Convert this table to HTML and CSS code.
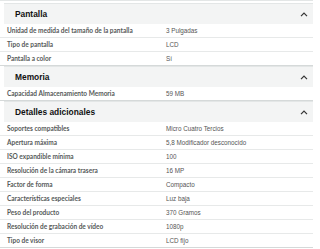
FILE: index.html
```html
<!DOCTYPE html>
<html lang="es">
<head>
<meta charset="utf-8">
<link rel="stylesheet" href="styles.css">
</head>
<body>
<div class="page">
  <section class="sec">
    <div class="head"><span class="title">Pantalla</span><svg class="chev" width="8" height="5" viewBox="0 0 8 5"><polyline points="1,4.2 4,1.2 7,4.2" fill="none" stroke="#333" stroke-width="1.2"/></svg></div>
    <div class="row"><span class="lab">Unidad de medida del tamaño de la pantalla</span><span class="val">3 Pulgadas</span></div>
    <div class="row"><span class="lab">Tipo de pantalla</span><span class="val">LCD</span></div>
    <div class="row"><span class="lab">Pantalla a color</span><span class="val">Sí</span></div>
  </section>
  <section class="sec">
    <div class="head"><span class="title">Memoria</span><svg class="chev" width="8" height="5" viewBox="0 0 8 5"><polyline points="1,4.2 4,1.2 7,4.2" fill="none" stroke="#333" stroke-width="1.2"/></svg></div>
    <div class="row"><span class="lab">Capacidad Almacenamiento Memoria</span><span class="val">59 MB</span></div>
  </section>
  <section class="sec">
    <div class="head"><span class="title">Detalles adicionales</span><svg class="chev" width="8" height="5" viewBox="0 0 8 5"><polyline points="1,4.2 4,1.2 7,4.2" fill="none" stroke="#333" stroke-width="1.2"/></svg></div>
    <div class="row"><span class="lab">Soportes compatibles</span><span class="val">Micro Cuatro Tercios</span></div>
    <div class="row"><span class="lab">Apertura máxima</span><span class="val">5,8 Modificador desconocido</span></div>
    <div class="row"><span class="lab">ISO expandible mínima</span><span class="val">100</span></div>
    <div class="row"><span class="lab">Resolución de la cámara trasera</span><span class="val">16 MP</span></div>
    <div class="row"><span class="lab">Factor de forma</span><span class="val">Compacto</span></div>
    <div class="row"><span class="lab">Características especiales</span><span class="val">Luz baja</span></div>
    <div class="row"><span class="lab">Peso del producto</span><span class="val">370 Gramos</span></div>
    <div class="row"><span class="lab">Resolución de grabación de vídeo</span><span class="val">1080p</span></div>
    <div class="row"><span class="lab">Tipo de visor</span><span class="val">LCD fijo</span></div>
  </section>
</div>
</body>
</html>
```
FILE: styles.css
```css
* { box-sizing: border-box; }
html, body { margin: 0; padding: 0; background: #fff; }
body { overflow: hidden; }
.page {
  width: 313px;
  padding-top: 2px;
  border-top: 1px solid #e3e6e6;
}
.head {
  height: 21px;
  margin-left: 4px;
  display: flex;
  align-items: center;
  justify-content: space-between;
  padding: 0 5px 0 11px;
  background: #f3f4f4;
  border-top: 1px solid #e3e6e6;
}
.title {
  font-family: "Liberation Sans", Arial, sans-serif;
  font-weight: 700;
  font-size: 8.4px;
  color: #111;
}
.row {
  height: 14px;
  display: grid;
  grid-template-columns: 159px 1fr;
  align-items: center;
  border-bottom: 1px solid #e7e9e9;
  padding-left: 7px;
}
.row:last-child { border-bottom: 1px solid #d5d9d9; }
.lab {
  font-family: "Lato", "Liberation Sans", sans-serif;
  font-weight: 700;
  font-size: 6.5px;
  color: #565959;
}
.val {
  font-family: "Liberation Sans", Arial, sans-serif;
  font-size: 6.3px;
  color: #555;
}
```
